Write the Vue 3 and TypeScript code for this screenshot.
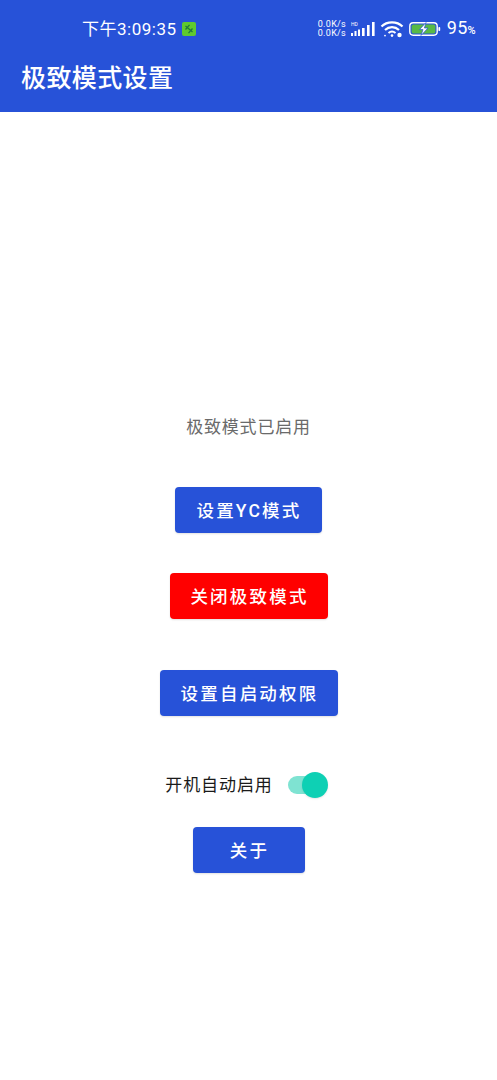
<script setup lang="ts">
const cjk = true
</script>

<template>
  <div class="page" :data-cjk="cjk">
    <header class="appbar">
      <div class="status">
        <div class="clock">
          <span class="time">下午3:09:35</span>
          <svg class="badge" viewBox="0 0 14 14" width="14" height="14">
            <rect width="14" height="14" rx="2" fill="#5fc92e" />
            <path d="M3.5 4 L10.5 10 M3.5 7.5 L7.5 2.8 M6.5 11.2 L10.5 6.5" stroke="#1f7a3a" stroke-width="1.3" fill="none" />
          </svg>
        </div>
        <div class="sys">
          <div class="speed"><span>0.0K/s</span><span>0.0K/s</span></div>
          <svg class="signal" viewBox="0 0 26 18" width="26" height="18">
            <text x="0" y="6" font-size="5" fill="#fff" font-family="Roboto, sans-serif">HD</text>
            <rect x="0" y="13" width="2" height="3" fill="#fff" />
            <rect x="3.5" y="11" width="2" height="5" fill="#fff" />
            <rect x="7" y="9.5" width="2" height="6.5" fill="#fff" />
            <rect x="11" y="8" width="2.6" height="8" fill="#fff" />
            <rect x="16" y="5" width="2.6" height="11" fill="#fff" />
            <rect x="21" y="2" width="2.6" height="14" fill="#fff" />
          </svg>
          <svg class="wifi" viewBox="0 0 24 18" width="24" height="18">
            <path d="M1.5 6.5 C7 1 17 1 22.5 6.5" stroke="#fff" stroke-width="2.2" fill="none" />
            <path d="M5 10 C9 6.2 15 6.2 19 10" stroke="#fff" stroke-width="2.2" fill="none" />
            <path d="M8.5 13 C10.8 11 13.2 11 15.5 13" stroke="#fff" stroke-width="2" fill="none" />
            <circle cx="5" cy="15.6" r="0.9" fill="#fff" />
            <circle cx="12" cy="15.6" r="1.3" fill="#fff" />
            <circle cx="19.5" cy="15" r="2.2" fill="#fff" />
          </svg>
          <svg class="battery" viewBox="0 0 32 14" width="32" height="14">
            <rect x="0.8" y="0.8" width="27.4" height="12.4" rx="3.4" fill="none" stroke="#fff" stroke-width="1.4" />
            <rect x="2.6" y="2.6" width="23.8" height="8.8" rx="1.6" fill="#58b947" />
            <rect x="29.4" y="5" width="1.8" height="4" rx="0.8" fill="#fff" />
            <path d="M17 0.5 L10.5 7.6 H14 L12 13.5 L19 6 H15.4 Z" fill="#fff" stroke="#2752d8" stroke-width="0.7" />
          </svg>
          <span class="pct">95<small>%</small></span>
        </div>
      </div>
      <h1 class="title">极致模式设置</h1>
    </header>

    <main class="content">
      <p class="state">极致模式已启用</p>
      <button class="btn btn-yc">设置YC模式</button>
      <button class="btn btn-red">关闭极致模式</button>
      <button class="btn btn-auto">设置自启动权限</button>
      <div class="switch-row">
        <span class="switch-label">开机自动启用</span>
        <span class="switch"><span class="track"></span><span class="thumb"></span></span>
      </div>
      <button class="btn btn-about">关于</button>
    </main>
  </div>
</template>

<style>
html, body { margin: 0; background: #fff; }
</style>

<style scoped>
.page {
  width: 497px;
  height: 1080px;
  background: #fff;
  font-family: Roboto, "Noto Sans CJK SC", sans-serif;
  overflow: hidden;
}
.appbar {
  height: 112px;
  box-sizing: border-box;
  background: #2752d8;
  color: #fff;
  padding-top: 16px;
}
.status {
  height: 26px;
  display: flex;
  align-items: center;
  justify-content: space-between;
  padding: 0 21px 0 82px;
}
.clock { display: flex; align-items: center; gap: 5px; }
.time { font-size: 17px; line-height: 26px; letter-spacing: 0.5px; }
.sys { display: flex; align-items: center; }
.speed {
  display: flex;
  flex-direction: column;
  font-size: 9px;
  line-height: 9.5px;
  width: 33px;
  letter-spacing: 0.3px;
}
.wifi { margin-left: 3px; }
.battery { margin-left: 5px; }
.pct { margin-left: 6px; font-size: 18px; line-height: 26px; letter-spacing: 0.3px; }
.pct small { font-size: 11px; font-weight: 500; }
.title {
  margin: 0;
  padding: 19px 0 0 21px;
  font-size: 25px;
  line-height: 36px;
  font-weight: 500;
  letter-spacing: 0.4px;
}
.content {
  display: flex;
  flex-direction: column;
  align-items: center;
}
.state {
  margin: 303px 0 0 0;
  font-size: 17px;
  line-height: 24px;
  letter-spacing: 0.8px;
  color: #6a6a6a;
}
.btn {
  display: block;
  box-sizing: border-box;
  height: 46px;
  padding: 0 0 2px 2px;
  border: 0;
  border-radius: 4px;
  color: #fff;
  font-family: inherit;
  font-size: 17.5px;
  font-weight: 500;
  letter-spacing: 2.2px;
  background: #2752d8;
  box-shadow: 0 1px 2px rgba(0, 0, 0, 0.12);
}
.btn-yc { width: 147px; margin-top: 48px; margin-right: 1px; }
.btn-red { width: 158px; margin-top: 40px; background: #ff0000; }
.btn-auto { width: 178px; margin-top: 51px; }
.btn-about { width: 112px; margin-top: 27px; }
.switch-row {
  display: flex;
  align-items: center;
  height: 30px;
  margin-top: 54px;
  margin-right: 2px;
}
.switch-label { font-size: 17px; line-height: 30px; letter-spacing: 0.9px; color: #1a1a1a; }
.switch {
  position: relative;
  display: block;
  width: 42px;
  height: 30px;
  margin-left: 15px;
}
.track {
  position: absolute;
  left: 0;
  top: 6px;
  width: 34px;
  height: 18px;
  border-radius: 9px;
  background: #7fe3d2;
}
.thumb {
  position: absolute;
  left: 14px;
  top: 2px;
  width: 26px;
  height: 26px;
  border-radius: 50%;
  background: #0ed0b4;
  box-shadow: 0 1px 2px rgba(0, 0, 0, 0.1);
}
</style>
